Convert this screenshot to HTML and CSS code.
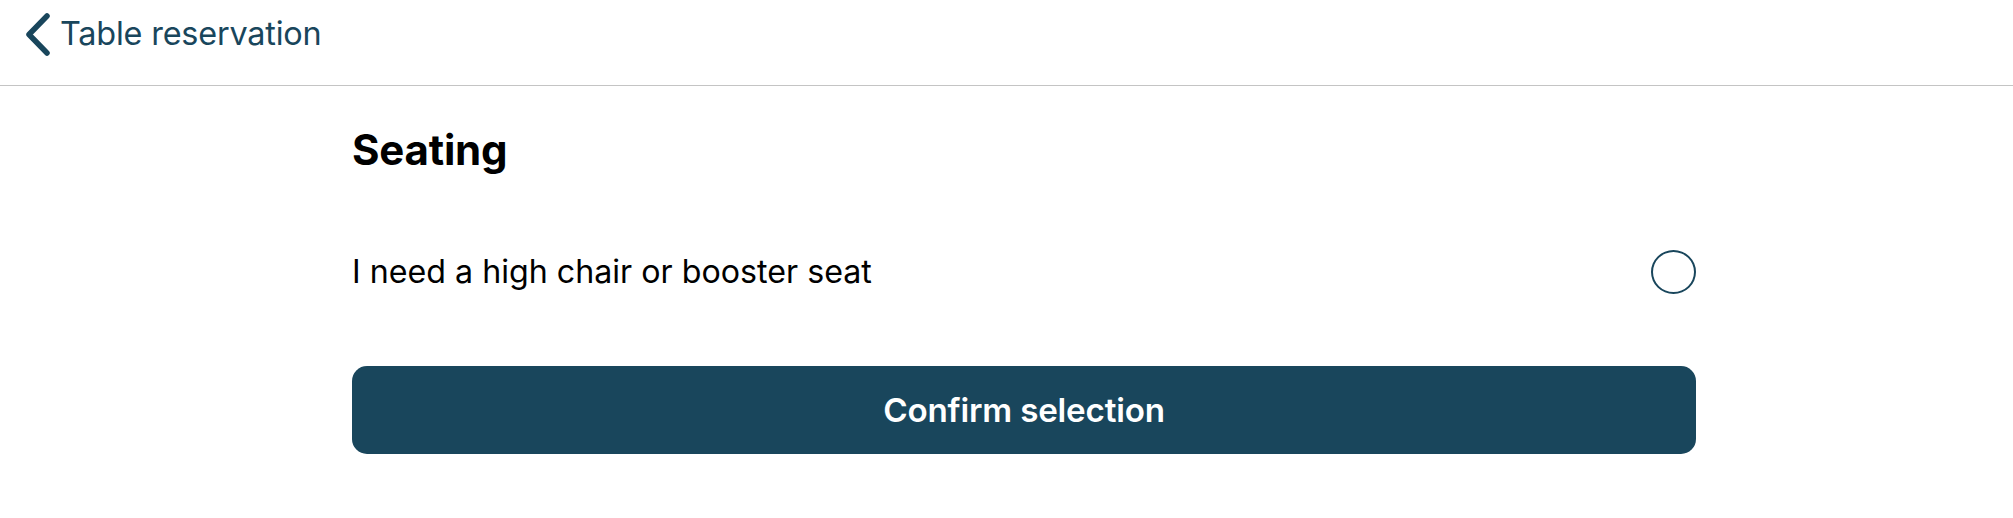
FILE: index.html
```html
<!DOCTYPE html>
<html lang="en">
<head>
<meta charset="utf-8">
<title>Table reservation</title>
<link rel="stylesheet" href="styles.css">
</head>
<body>
<header class="topbar">
  <a class="back" href="#">
    <svg class="back-icon" width="28" height="44" viewBox="0 0 28 44" aria-hidden="true">
      <path d="M23 4 L5 22.5 L23 41" fill="none" stroke="#19465c" stroke-width="5.5" stroke-linecap="round" stroke-linejoin="round"/>
    </svg>
    <span class="back-label">Table reservation</span>
  </a>
</header>
<main class="content">
  <h1 class="title">Seating</h1>
  <div class="option-row">
    <span class="option-label">I need a high chair or booster seat</span>
    <span class="radio" role="radio" aria-checked="false"></span>
  </div>
  <button class="confirm" type="button">Confirm selection</button>
</main>
</body>
</html>
```

FILE: styles.css
```css
* { box-sizing: border-box; }

html, body {
  margin: 0;
  padding: 0;
  background: #ffffff;
  font-family: Inter, "Noto Sans", "Liberation Sans", sans-serif;
}

.topbar {
  height: 86px;
  border-bottom: 1px solid #c4c4c4;
  display: flex;
  align-items: flex-start;
  padding-left: 24px;
}

.back {
  display: flex;
  align-items: center;
  text-decoration: none;
  color: #19465c;
  margin-top: 12px;
}

.back-icon {
  display: block;
  flex: none;
}

.back-label {
  font-size: 32.4px;
  line-height: 44px;
  margin-left: 8px;
  color: #19465c;
  letter-spacing: -0.2px;
}

.content {
  margin-left: 352px;
  width: 1344px;
  display: flex;
  flex-direction: column;
}

.title {
  margin: 40px 0 0 0;
  font-size: 42px;
  line-height: 48px;
  font-weight: 700;
  color: #000;
  letter-spacing: -0.2px;
}

.option-row {
  margin-top: 76px;
  height: 44px;
  display: flex;
  align-items: center;
  justify-content: space-between;
}

.option-label {
  font-size: 32.2px;
  line-height: 44px;
  color: #000;
  letter-spacing: 0;
}

.radio {
  width: 45px;
  height: 44px;
  border-radius: 50%;
  border: 2px solid #19465c;
  flex: none;
}

.confirm {
  margin-top: 72px;
  height: 88px;
  width: 100%;
  border: none;
  border-radius: 15px;
  background: #19465c;
  color: #ffffff;
  font-family: inherit;
  font-size: 33.2px;
  font-weight: 600;
  line-height: 88px;
  padding: 0;
  letter-spacing: -0.2px;
}
```
